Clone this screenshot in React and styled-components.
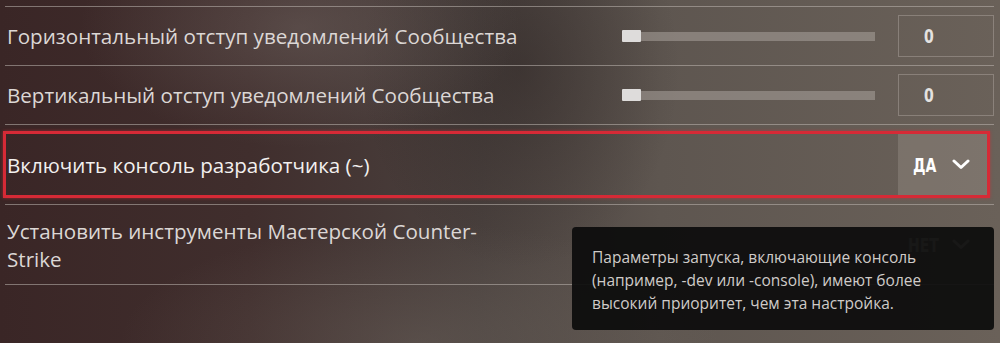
import React from "react";
import styled, { createGlobalStyle } from "styled-components";

const Global = createGlobalStyle`
  html, body { margin: 0; padding: 0; }
  body {
    width: 1000px;
    height: 343px;
    overflow: hidden;
    font-family: "Open Sans", "Noto Sans", sans-serif;
    background:
      radial-gradient(ellipse 220px 120px at 30% 8%, rgba(130,120,115,0.35), rgba(130,120,115,0) 100%),
      radial-gradient(ellipse 160px 200px at 52% 20%, rgba(30,22,22,0.35), rgba(30,22,22,0) 100%),
      radial-gradient(ellipse 300px 120px at 42% 100%, rgba(120,112,104,0.35), rgba(120,112,104,0) 100%),
      linear-gradient(90deg, #3a2626 0%, #402e2d 25%, #4a413e 48%, #5e5650 66%, #6a6159 100%);
  }
`;

const List = styled.div`
  padding: 6px 6px 0 5px;
`;

const Row = styled.div`
  position: relative;
  display: flex;
  align-items: center;
  height: ${(p) => p.$h}px;
  border-top: ${(p) => (p.$first ? "1px solid rgba(190,182,176,0.55)" : "none")};
  border-bottom: 1px solid rgba(190,182,176,0.55);
`;

const Label = styled.div`
  flex: 1;
  padding-left: ${(p) => p.$pad ?? 2}px;
  font-size: 20.6px;
  line-height: 28px;
  color: ${(p) => (p.$bright ? "#f2f0ef" : "#dcd7d5")};
  max-width: ${(p) => p.$max || "none"};
`;

const Track = styled.div`
  position: relative;
  width: 253px;
  height: 9px;
  margin-right: 23px;
  background: rgba(170,162,156,0.55);
`;

const Thumb = styled.div`
  position: absolute;
  left: 0;
  top: -2px;
  width: 19px;
  height: 12px;
  background: #dedcdb;
  border-radius: 1px;
`;

const NumberBox = styled.div`
  box-sizing: border-box;
  width: 96px;
  height: 42px;
  border: 1px solid rgba(200,192,186,0.35);
  display: flex;
  align-items: center;
  padding-left: 25px;
  font-family: "DejaVu Sans Condensed", "DejaVu Sans", sans-serif;
  font-weight: bold;
  font-size: 19px;
  color: #e4e2e0;
`;

const Digit = styled.span`
  display: inline-block;
  transform: scaleX(0.82);
  transform-origin: left center;
`;

const Highlight = styled.div`
  box-sizing: border-box;
  flex: 1;
  display: flex;
  align-items: center;
  align-self: stretch;
  margin: 6px 4px 6px -2px;
  border: 3px solid #d62a36;
  box-shadow: 0 0 3px rgba(214,42,54,0.6);
`;

const Dropdown = styled.div`
  box-sizing: border-box;
  width: 89px;
  display: flex;
  align-items: center;
  justify-content: space-between;
  padding: 0 17px 0 ${(p) => p.$padl}px;
  margin-left: auto;
  margin-right: ${(p) => p.$mr || 0}px;
  align-self: ${(p) => (p.$active ? "stretch" : "center")};
  height: ${(p) => (p.$active ? "auto" : "60px")};
  background: ${(p) => (p.$active ? "rgba(160,152,144,0.35)" : "transparent")};
  color: ${(p) => (p.$active ? "#ffffff" : "#b8b2ac")};
`;

const DropText = styled.span`
  display: inline-block;
  font-family: "DejaVu Sans Condensed", "DejaVu Sans", sans-serif;
  font-weight: bold;
  font-size: 20px;
  transform: scaleX(0.78);
  transform-origin: left center;
  width: 24px;
  white-space: nowrap;
`;

const Tooltip = styled.div`
  position: absolute;
  top: 22px;
  right: 0;
  width: 422px;
  box-sizing: border-box;
  padding: 19px 20px 15px;
  background: rgba(12,12,12,0.93);
  border-radius: 4px;
  font-size: 15.5px;
  line-height: 23px;
  color: #cfcbc8;
`;

const Chevron = () => (
  <svg width="18" height="11" viewBox="0 0 18 11" fill="none">
    <path d="M2 2 L9 8.5 L16 2" stroke="currentColor" strokeWidth="3" strokeLinecap="round" strokeLinejoin="round" />
  </svg>
);

const SliderRow = ({ label, first }) => (
  <Row $h={58} $first={first}>
    <Label>{label}</Label>
    <Track>
      <Thumb />
    </Track>
    <NumberBox>
      <Digit>0</Digit>
    </NumberBox>
  </Row>
);

export default function App() {
  return (
    <>
      <Global />
      <List>
        <SliderRow first label="Горизонтальный отступ уведомлений Сообщества" />
        <SliderRow label="Вертикальный отступ уведомлений Сообщества" />
        <Row $h={79}>
          <Highlight>
            <Label $pad={1} $bright>Включить консоль разработчика (~)</Label>
            <Dropdown $active $padl={15}>
              <DropText>ДА</DropText>
              <Chevron />
            </Dropdown>
          </Highlight>
        </Row>
        <Row $h={79}>
          <Label $max="500px">Установить инструменты Мастерской Counter-Strike</Label>
          <Dropdown $padl={10} $mr={7}>
            <DropText>НЕТ</DropText>
            <Chevron />
          </Dropdown>
          <Tooltip>
            Параметры запуска, включающие консоль (например, -dev или -console), имеют более высокий приоритет, чем эта настройка.
          </Tooltip>
        </Row>
      </List>
    </>
  );
}
